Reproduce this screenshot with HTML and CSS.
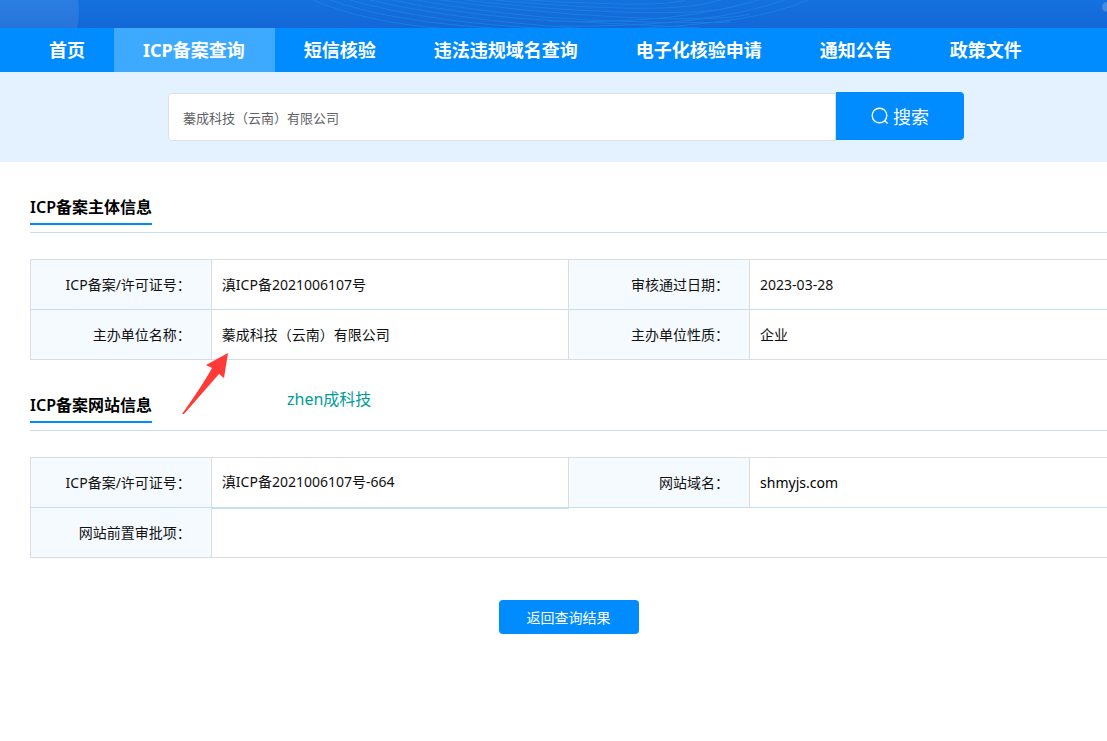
FILE: index.html
```html
<!DOCTYPE html>
<html lang="zh-CN">
<head>
<meta charset="utf-8">
<title>ICP备案查询</title>
<meta name="viewport" content="width=device-width, initial-scale=1">
<link rel="stylesheet" href="styles.css">
</head>
<body>
<header class="banner">
  <svg class="banner-art" viewBox="0 0 1107 28" preserveAspectRatio="none" aria-hidden="true">
    <path d="M0 0H73Q75 14 72 28H0Z" transform="translate(0 0) scale(1.07 1)" fill="#fff" opacity=".09"/>
    <g fill="none" stroke="#1d8ce6" stroke-width="1" opacity=".6">
      <path d="M309 -2Q360 22 448 29"/>
      <path d="M325 -2Q390 23 510 29"/>
      <path d="M343 -2Q430 24 560 29"/>
      <path d="M362 -2Q450 20 590 29"/>
      <path d="M382 -2Q470 17 560 21T700 28"/>
      <path d="M405 -2Q500 16 590 20T730 22"/>
      <path d="M427 -2Q520 12 620 17T750 14"/>
      <path d="M450 -2Q530 9 620 12T740 5"/>
      <path d="M475 -2Q550 6 620 8T720 0"/>
      <path d="M500 -2Q560 3 620 4T690 -2"/>
      <path d="M530 29Q740 33 812 -2"/>
      <path d="M560 26Q710 28 790 -2"/>
      <path d="M550 21Q680 25 765 -2"/>
    </g>
    <circle cx="1107" cy="7" r="5" fill="#fff" opacity=".2"/>
  </svg>
</header>
<nav class="nav" aria-label="主导航">
  <a class="nav-item" href="#">首页</a>
  <a class="nav-item is-active" href="#" aria-current="page">ICP备案查询</a>
  <a class="nav-item" href="#">短信核验</a>
  <a class="nav-item" href="#">违法违规域名查询</a>
  <a class="nav-item" href="#">电子化核验申请</a>
  <a class="nav-item" href="#">通知公告</a>
  <a class="nav-item" href="#">政策文件</a>
</nav>
<form class="search" role="search">
  <input class="search-input" type="text" aria-label="单位名称" value="蓁成科技（云南）有限公司">
  <button class="search-button" type="button">
    <svg class="search-icon" viewBox="0 0 18 18" aria-hidden="true">
      <circle cx="8.5" cy="8.5" r="7.3"/>
      <path d="M13.5 13.5L16.6 16.6"/>
    </svg>
    <span>搜索</span>
  </button>
</form>
<main class="content">
  <section class="section">
    <div class="section-head"><h2 class="section-title">ICP备案主体信息</h2></div>
    <table class="info">
      <colgroup><col class="col-label"><col class="col-value"><col class="col-label"><col class="col-value"></colgroup>
      <tbody>
        <tr><th scope="row">ICP备案/许可证号：</th><td>滇ICP备2021006107号</td><th scope="row">审核通过日期：</th><td>2023-03-28</td></tr>
        <tr><th scope="row">主办单位名称：</th><td>蓁成科技（云南）有限公司</td><th scope="row">主办单位性质：</th><td>企业</td></tr>
      </tbody>
    </table>
    <svg class="arrow" viewBox="0 0 48 64" aria-hidden="true">
      <path d="M46 1L24 13L30 16Q22 31 0 62L2 62L37 22L42 26Z" fill="#ff3b38"/>
    </svg>
    <span class="note">zhen成科技</span>
  </section>
  <section class="section">
    <div class="section-head"><h2 class="section-title">ICP备案网站信息</h2></div>
    <table class="info">
      <colgroup><col class="col-label"><col class="col-value"><col class="col-label"><col class="col-value"></colgroup>
      <tbody>
        <tr><th scope="row">ICP备案/许可证号：</th><td class="is-marked">滇ICP备2021006107号-664</td><th scope="row">网站域名：</th><td class="domain">shmyjs.com</td></tr>
        <tr><th scope="row">网站前置审批项：</th><td colspan="3"></td></tr>
      </tbody>
    </table>
  </section>
  <div class="actions"><button class="back-button" type="button">返回查询结果</button></div>
</main>
</body>
</html>
```
FILE: styles.css
```css
* {
  box-sizing: border-box;
}

body {
  margin: 0;
  background: #fff;
  color: #111;
  font-family: "Noto Sans", "Noto Sans CJK SC", sans-serif;
  font-size: 14px;
  overflow-x: hidden;
}

button,
input {
  font-family: inherit;
}

.banner {
  height: 28px;
  background: linear-gradient(#1571de, #1367d7);
}

.banner-art {
  display: block;
  width: 100%;
  height: 100%;
}

.nav {
  display: flex;
  padding-left: 20px;
  background: #008cff;
}

.nav-item {
  padding: 0 29px;
  color: #fff;
  font-size: 18px;
  font-weight: 700;
  line-height: 44px;
  text-decoration: none;
  white-space: nowrap;
}

.nav-item.is-active {
  padding: 0 30px 0 29px;
  background: #3eaaff;
}

.search {
  display: flex;
  justify-content: center;
  padding: 20px 0 21px 25px;
  background: #e4f2ff;
}

.search-input {
  flex: 0 1 668px;
  min-width: 0;
  height: 48px;
  margin-top: 1px;
  padding: 0 14px;
  border: 1px solid #dcdfe6;
  border-radius: 4px 0 0 4px;
  background: #fff;
  color: #606266;
  font-size: 13px;
}

.search-button {
  display: flex;
  flex: none;
  align-items: center;
  justify-content: center;
  gap: 4px;
  width: 128px;
  height: 48px;
  padding: 0;
  border: 0;
  border-radius: 0 4px 4px 0;
  background: #008cff;
  color: #fff;
  font-size: 18px;
}

.search-icon {
  width: 18px;
  height: 18px;
  fill: none;
  stroke: #fff;
  stroke-width: 1.4;
}

.content {
  padding-left: 30px;
}

.section {
  position: relative;
  padding-top: 33px;
}

.section-head {
  display: flex;
  margin-bottom: 26px;
  padding-bottom: 7px;
  border-bottom: 1px solid #c8ddee;
}

.section-title {
  margin: 0;
  padding-bottom: 4px;
  border-bottom: 2px solid #008cff;
  color: #000;
  font-size: 16px;
  font-weight: 600;
  line-height: 24px;
}

.info {
  width: 100%;
  table-layout: fixed;
  border-collapse: collapse;
  border: 1px solid #dadde0;
  border-right: 0;
}

.col-label {
  width: 16.8%;
}

.col-value {
  width: 33.2%;
}

.info th,
.info td {
  height: 50px;
  padding: 0 10px;
  border-left: 1px solid #dadde0;
  font-weight: 400;
  line-height: 20px;
  text-align: left;
}

.info th {
  padding-right: 20px;
  background: #f5faff;
  text-align: right;
}

.info tr + tr > * {
  border-top: 1px solid #c8ddee;
}

.info .is-marked {
  border-bottom: 2px solid #c8ddee;
}

.info .domain {
  color: #000;
}

.arrow {
  position: absolute;
  top: 190px;
  left: 152px;
  width: 48px;
  height: 64px;
}

.note {
  position: absolute;
  top: 225px;
  left: 257px;
  color: #009c98;
  font-size: 16px;
  line-height: 24px;
}

.actions {
  padding: 42px 0;
  text-align: center;
}

.back-button {
  width: 140px;
  height: 34px;
  padding: 0;
  border: 0;
  border-radius: 4px;
  background: #008cff;
  color: #fff;
  font-size: 14px;
}
```
